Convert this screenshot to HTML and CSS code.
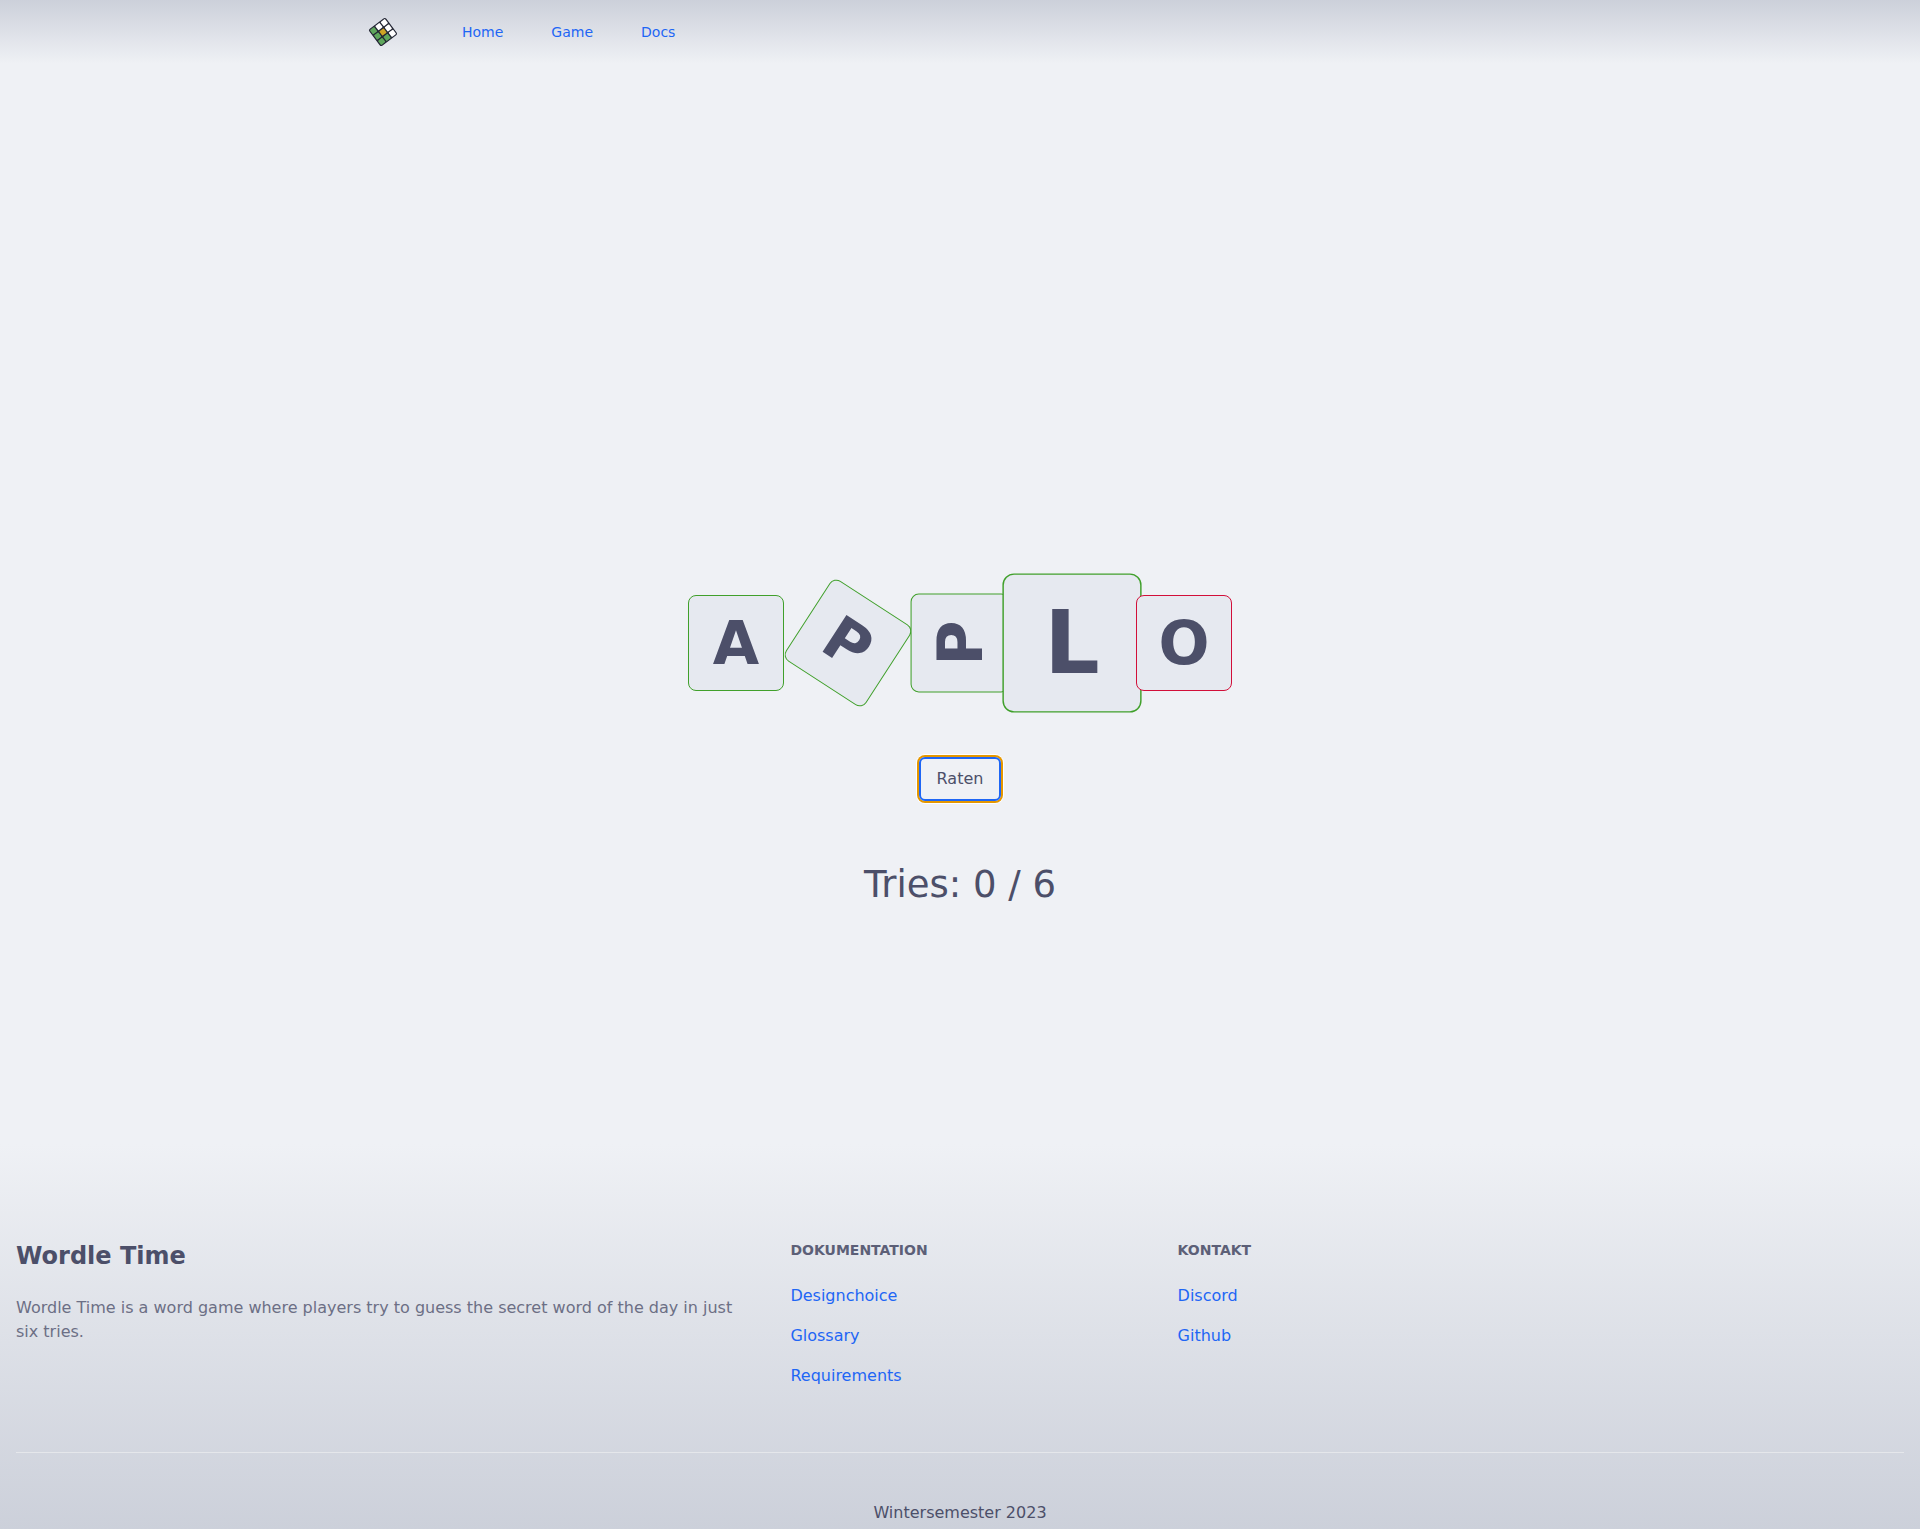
FILE: index.html
```html
<!DOCTYPE html>
<html lang="en">
<head>
  <meta charset="utf-8">
  <meta name="viewport" content="width=device-width, initial-scale=1">
  <title>Wordle Time</title>
  <link rel="stylesheet" href="styles.css">
</head>
<body>
  <header class="header">
    <nav class="nav" aria-label="Main">
      <a class="logo" href="#" aria-label="Wordle Time">
        <svg viewBox="0 0 30 30" width="30" height="30" aria-hidden="true">
          <g transform="rotate(-37 15 15)" stroke="#232634" stroke-width="1.2">
            <rect x="5" y="5" width="20" height="20" rx="1.5" fill="#232634"/>
            <g stroke="none">
              <g fill="#5fa75c">
                <rect x="5.6" y="5.6" width="5.4" height="5.4" rx=".7"/>
                <rect x="5.6" y="12.3" width="5.4" height="5.4" rx=".7"/>
                <rect x="5.6" y="19" width="5.4" height="5.4" rx=".7"/>
                <rect x="12.3" y="19" width="5.4" height="5.4" rx=".7"/>
              </g>
              <rect x="12.3" y="12.3" width="5.4" height="5.4" rx=".7" fill="#cfa425"/>
              <g fill="#fff">
                <rect x="12.3" y="5.6" width="5.4" height="5.4" rx=".7"/>
                <rect x="19" y="5.6" width="5.4" height="5.4" rx=".7"/>
                <rect x="19" y="12.3" width="5.4" height="5.4" rx=".7"/>
              </g>
              <rect x="19" y="19" width="5.4" height="5.4" rx=".7" fill="#fff"/>
            </g>
          </g>
        </svg>
      </a>
      <ul class="nav-links">
        <li><a href="#">Home</a></li>
        <li><a href="#">Game</a></li>
        <li><a href="#">Docs</a></li>
      </ul>
    </nav>
  </header>

  <main class="game">
    <div class="tiles">
      <div class="tile">A</div>
      <div class="tile tile-tilted">P</div>
      <div class="tile tile-turned">P</div>
      <div class="tile tile-grown">L</div>
      <div class="tile tile-wrong">O</div>
    </div>
    <button class="guess" type="button">Raten</button>
    <p class="tries">Tries: 0 / 6</p>
  </main>

  <footer class="footer">
    <div class="footer-grid">
      <section class="about">
        <h2>Wordle Time</h2>
        <p>Wordle Time is a word game where players try to guess the secret word of the day in just six tries.</p>
      </section>
      <section class="link-group">
        <h3>Dokumentation</h3>
        <ul>
          <li><a href="#">Designchoice</a></li>
          <li><a href="#">Glossary</a></li>
          <li><a href="#">Requirements</a></li>
        </ul>
      </section>
      <section class="link-group">
        <h3>Kontakt</h3>
        <ul>
          <li><a href="#">Discord</a></li>
          <li><a href="#">Github</a></li>
        </ul>
      </section>
    </div>
    <p class="term">Wintersemester 2023</p>
  </footer>
</body>
</html>
```
FILE: styles.css
```css
:root {
  --base: #eff1f5;
  --tile: #e6e9f0;
  --surface: #ccd0da;
  --text: #4c4f69;
  --subtext: #5c5f77;
  --muted: #6c6f85;
  --blue: #1e66f5;
  --green: #40a02b;
  --red: #d20f39;
}

*,
*::before,
*::after {
  box-sizing: border-box;
}

body,
h2,
h3,
p,
ul {
  margin: 0;
  padding: 0;
}

ul {
  list-style: none;
}

a {
  color: var(--blue);
  text-decoration: none;
}

body {
  display: flex;
  flex-direction: column;
  min-height: 100vh;
  background: var(--base);
  color: var(--text);
  font: 16px/24px "DejaVu Sans", sans-serif;
}

.header {
  background: linear-gradient(var(--surface), var(--base));
}

.nav {
  display: flex;
  align-items: center;
  gap: 64px;
  max-width: 1280px;
  height: 64px;
  margin: 0 auto;
  padding: 0 48px;
}

.logo {
  display: flex;
}

.nav-links {
  display: flex;
  gap: 48px;
  font-size: 14px;
  line-height: 20px;
}

.game {
  display: flex;
  flex: 1;
  flex-direction: column;
  align-items: center;
  justify-content: center;
  gap: 64px;
  padding: 292px 16px 0;
}

.tiles {
  display: flex;
  gap: 16px;
  padding-bottom: 2px;
}

.tile {
  display: grid;
  place-items: center;
  width: 96px;
  height: 96px;
  border: 1px solid var(--green);
  border-radius: 8px;
  background: var(--tile);
  font-size: 60px;
  font-weight: 700;
  line-height: 60px;
}

.tile-tilted {
  transform: rotate(33deg);
}

.tile-turned {
  transform: rotate(-90deg) scale(1.03);
}

.tile-grown {
  transform: scale(1.45);
}

.tile-wrong {
  z-index: 1;
  border-color: var(--red);
}

.guess {
  padding: 8px 16px;
  border: 2px solid var(--blue);
  border-radius: 6px;
  background: transparent;
  box-shadow: 0 0 0 2px #e59700, 0 0 0 3px #fff;
  color: inherit;
  font: inherit;
}

.tries {
  font-size: 37px;
  line-height: 40px;
}

.footer {
  padding: 96px 16px 4px;
  background: linear-gradient(var(--base), var(--surface));
}

.footer-grid {
  display: grid;
  grid-template-columns: repeat(5, 1fr);
  gap: 48px;
  padding-bottom: 64px;
  border-bottom: 1px solid #e5e7eb;
}

.about {
  grid-column: span 2;
}

.about h2 {
  margin-bottom: 24px;
  font-size: 24px;
  line-height: 32px;
}

.about p {
  color: var(--muted);
}

.link-group h3 {
  margin-bottom: 24px;
  color: var(--subtext);
  font-size: 14px;
  line-height: 20px;
  text-transform: uppercase;
}

.link-group ul {
  display: grid;
  gap: 16px;
}

.term {
  padding-top: 48px;
  text-align: center;
}
```
